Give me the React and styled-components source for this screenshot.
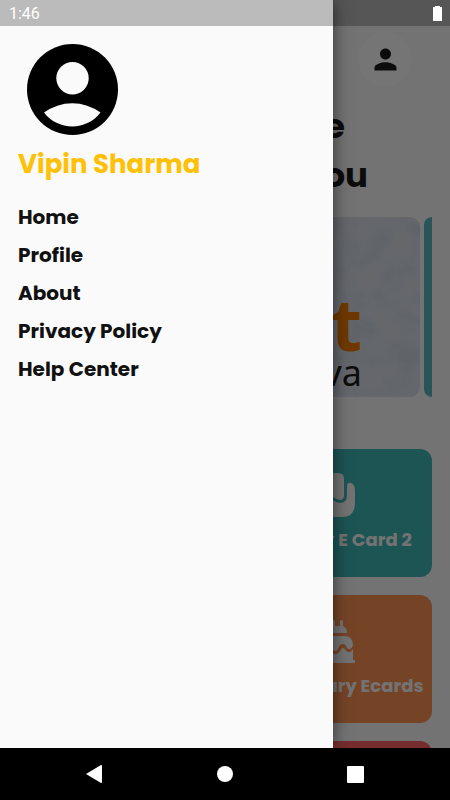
import React from "react";
import styled, { createGlobalStyle } from "styled-components";
import { MdPerson } from "react-icons/md";

const GlobalStyle = createGlobalStyle`
  * {
    box-sizing: border-box;
  }

  body {
    margin: 0;
    background: #000;
    font-family: Poppins, Inter, "Liberation Sans", sans-serif;
    color: #1c1c1c;
  }

  h1, h2, p, ul {
    margin: 0;
    padding: 0;
  }

  button {
    border: 0;
    padding: 0;
    font: inherit;
    color: inherit;
    cursor: pointer;
  }
`;

const Phone = styled.div`
  height: 100vh;
  display: flex;
  flex-direction: column;
`;

const Viewport = styled.div`
  position: relative;
  flex: 1;
  min-height: 0;
  overflow: hidden;
  background: #fafafa;
`;

const Page = styled.main`
  padding: 32px 18px 0;
`;

const TopBar = styled.header`
  display: flex;
  justify-content: flex-end;
  padding-right: 20px;
`;

const ProfileButton = styled.button`
  display: flex;
  align-items: center;
  justify-content: center;
  width: 54px;
  height: 54px;
  border-radius: 50%;
  background: #fff;

  svg {
    width: 33px;
    height: 33px;
  }
`;

const Heading = styled.h1`
  display: grid;
  margin-top: 16px;
  font-size: 34px;
  font-weight: 700;
  line-height: 49px;
  text-align: right;
`;

const HeadingLine = styled.span`
  padding-right: ${(props) => props.$inset};
`;

const Carousel = styled.section`
  display: flex;
  justify-content: flex-end;
  gap: 4px;
  height: 180px;
  margin-top: 17px;
  overflow: hidden;
`;

const Banner = styled.div`
  position: relative;
  flex: 1;
  display: flex;
  flex-direction: column;
  align-items: flex-end;
  padding: 74px 58px 0 0;
  border-radius: 10px;
  overflow: hidden;
  background: #dce1ea;
`;

const Marble = styled.svg`
  position: absolute;
  inset: 0;
  width: 100%;
  height: 100%;
`;

const BannerTitle = styled.p`
  position: relative;
  font-family: "Open Sans", "Noto Sans", sans-serif;
  font-size: 72px;
  font-weight: 700;
  line-height: 64px;
  color: #f17a00;
`;

const BannerText = styled.p`
  position: relative;
  font-family: "Noto Sans", "Open Sans", sans-serif;
  font-size: 36px;
  line-height: 36px;
`;

const NextBanner = styled.div`
  width: 8px;
  border-radius: 10px 0 0 10px;
  background: #5bb7bf;
`;

const Cards = styled.section`
  display: grid;
  grid-template-columns: 1fr 1fr;
  gap: 18px;
  margin-top: 52px;
`;

const Card = styled.button`
  display: flex;
  flex-direction: column;
  align-items: center;
  height: 128px;
  padding-top: 24px;
  border-radius: 12px;
  background: ${(props) => props.$color};
  color: #fafafa;
  font-size: 18px;
  font-weight: 700;
  line-height: 26px;
  white-space: nowrap;

  svg {
    width: 44px;
    height: 44px;
    margin-bottom: 10px;
  }
`;

const Scrim = styled.div`
  position: absolute;
  inset: 0;
  background: rgba(0, 0, 0, 0.54);
`;

const Drawer = styled.aside`
  position: absolute;
  inset: 0 auto 0 0;
  width: 74%;
  padding: 44px 18px 0;
  background: #fafafa;
  box-shadow: 0 0 16px rgba(0, 0, 0, 0.55);
`;

const Avatar = styled.svg`
  display: block;
  width: 91px;
  height: 91px;
  margin-left: 9px;
`;

const UserName = styled.h2`
  margin-top: 8px;
  font-size: 26px;
  font-weight: 700;
  line-height: 42px;
  color: #ffc107;
`;

const Menu = styled.ul`
  margin-top: 13px;
  list-style: none;
`;

const MenuLink = styled.a`
  display: block;
  font-size: 20px;
  font-weight: 700;
  line-height: 38px;
  color: #111;
  text-decoration: none;
`;

const StatusBar = styled.div`
  position: absolute;
  inset: 0 0 auto;
  display: flex;
  align-items: center;
  justify-content: space-between;
  height: 26px;
  padding: 1px 8px 0 9px;
  background: rgba(0, 0, 0, 0.25);
  color: #fff;
  font-family: Roboto, sans-serif;
  font-size: 16px;
`;

const NavBar = styled.nav`
  display: grid;
  grid-template-columns: repeat(3, 1fr);
  height: 52px;
  padding: 0 30px;
  background: #000;
`;

const NavButton = styled.button`
  display: flex;
  align-items: center;
  justify-content: center;
  background: none;
  color: #fff;
`;

const links = ["Home", "Profile", "About", "Privacy Policy", "Help Center"];

const GreetingIcon = () => (
  <svg viewBox="0 0 44 44" fill="currentColor">
    <path d="M11 6Q11 0 17 0H27Q33 0 33 6V22Q33 27 29 27Q26 27 22 24Q18 27 15 27Q11 27 11 22Z" />
    <path d="M0 13Q0 9 4 9Q8 9 8 14V22Q8 30 15 30Q19 30 22 27Q26 30 29 30Q36 30 36 22V14Q36 9 40 10Q44 11 44 18V30Q44 44 31 44H13Q0 44 0 30Z" />
  </svg>
);

const CakeIcon = () => (
  <svg viewBox="0 0 44 44" fill="currentColor">
    <path d="M8 14Q8 9 12 8V2Q14 0 15 2V7H20V2Q22 0 24 2V7H29V2Q31 0 32 2V7Q36 9 36 14Z" />
    <path d="M2 26Q2 17 11 17H33Q42 17 42 26Q41 30 38 30C35 30 36 25 32 25C27 25 28 32 24 32C20 32 20 25 16 25C12 25 12 30 8 30Q3 30 2 26Z" />
    <path d="M2 34Q8 36 12 33Q14 29 16 29C19 29 19 35 24 35C30 35 29 29 32 29C34 29 35 34 39 33Q41 32 42 30V41H44V44H0V41H2Z" />
  </svg>
);

const App = () => {
  return (
    <Phone>
      <GlobalStyle />
      <Viewport>
        <Page>
          <TopBar>
            <ProfileButton aria-label="Profile">
              <MdPerson />
            </ProfileButton>
          </TopBar>
          <Heading>
            <HeadingLine $inset="87px">e</HeadingLine>
            <HeadingLine $inset="64px">you</HeadingLine>
          </Heading>
          <Carousel>
            <Banner>
              <Marble aria-hidden="true">
                <filter id="marble" x="0" y="0" width="100%" height="100%">
                  <feTurbulence type="fractalNoise" baseFrequency="0.04" numOctaves="4" seed="7" />
                  <feColorMatrix values="0 0 0 0 0.6  0 0 0 0 0.68  0 0 0 0 0.77  1.6 0 0 0 -0.6" />
                </filter>
                <rect width="100%" height="100%" filter="url(#marble)" />
              </Marble>
              <BannerTitle>t</BannerTitle>
              <BannerText>va</BannerText>
            </Banner>
            <NextBanner />
          </Carousel>
          <Cards>
            <Card $color="#41b7b7" />
            <Card $color="#41b7b7">
              <GreetingIcon />
              Birthday E Card 2
            </Card>
            <Card $color="#ff9455" />
            <Card $color="#ff9455">
              <CakeIcon />
              Anniversary Ecards
            </Card>
            <Card $color="#ff6266" />
            <Card $color="#ff6266" />
          </Cards>
        </Page>
        <Scrim />
        <Drawer>
          <Avatar viewBox="0 0 91 91">
            <circle cx="45.5" cy="45.5" r="45.5" />
            <circle cx="45.5" cy="34.3" r="16.2" fill="#fafafa" />
            <path d="M17 68.5A48 48 0 0 1 73.5 68.5A35.5 35.5 0 0 1 17 68.5Z" fill="#fafafa" />
          </Avatar>
          <UserName>Vipin Sharma</UserName>
          <Menu>
            {links.map((link) => (
              <li key={link}>
                <MenuLink href="#">{link}</MenuLink>
              </li>
            ))}
          </Menu>
        </Drawer>
        <StatusBar>
          <span>1:46</span>
          <svg width="9" height="15" viewBox="0 0 9 15" fill="currentColor">
            <path d="M2 0H7V1H9V15H0V1H2Z" />
          </svg>
        </StatusBar>
      </Viewport>
      <NavBar>
        <NavButton aria-label="Back">
          <svg width="18" height="18" viewBox="0 0 18 18" fill="currentColor">
            <path d="M0 9L15 0Q16 0 16 1V17Q16 18 15 18Z" />
          </svg>
        </NavButton>
        <NavButton aria-label="Home">
          <svg width="16" height="16" viewBox="0 0 16 16" fill="currentColor">
            <circle cx="8" cy="8" r="8" />
          </svg>
        </NavButton>
        <NavButton aria-label="Recent apps">
          <svg width="17" height="17" viewBox="0 0 17 17" fill="currentColor">
            <rect width="17" height="17" rx="1" />
          </svg>
        </NavButton>
      </NavBar>
    </Phone>
  );
};

export default App;
